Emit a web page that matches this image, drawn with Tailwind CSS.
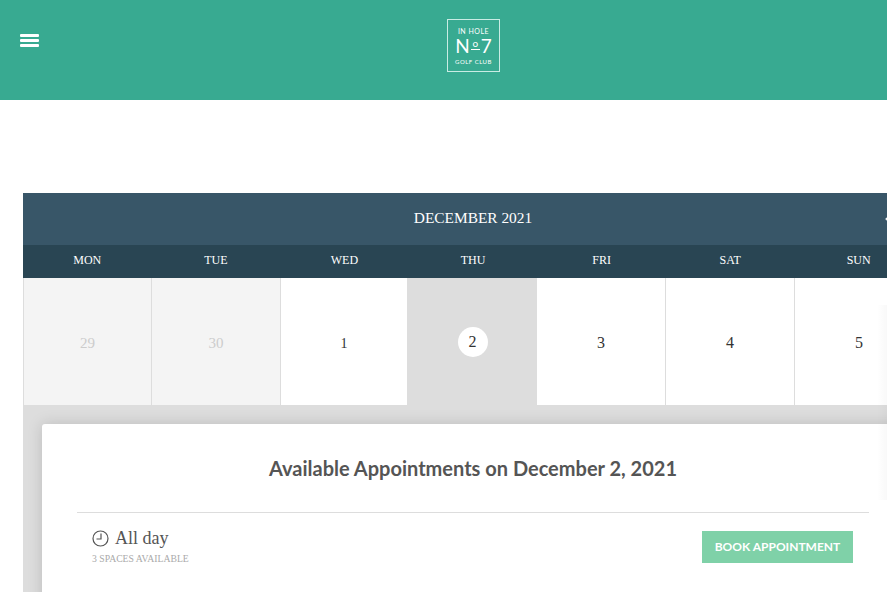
<!DOCTYPE html>
<html lang="en">
<head>
    <meta charset="UTF-8">
    <meta name="viewport" content="width=device-width, initial-scale=1.0">
    <script src="https://cdn.jsdelivr.net/npm/@tailwindcss/browser@4"></script>
    <title>Appointments</title>
</head>
<body class="relative h-[592px] overflow-hidden bg-white font-['Liberation_Serif',serif]">
    <header class="flex h-[100px] items-start bg-[#38aa91] pt-[19px]">
        <button class="ml-[20px] mt-[15px] flex w-[19px] flex-col gap-[2px]">
            <span class="h-[3px] rounded-[1px] bg-white"></span>
            <span class="h-[3px] rounded-[1px] bg-white"></span>
            <span class="h-[3px] rounded-[1px] bg-white"></span>
        </button>
        <div class="ml-[408px] flex h-[53px] w-[53px] flex-col items-center border border-[#c9ece4] pt-[7px] font-['Lato',sans-serif] text-white">
            <span class="text-[7px] leading-[8px] tracking-[0.5px]">IN HOLE</span>
            <span class="mt-[2px] flex h-[17px] items-start text-[19px] leading-[18px]">N<span class="mx-[1px] flex flex-col items-center pt-[2px] text-[10px] leading-[9px]">o<span class="mt-[1px] h-[1px] w-[9px] bg-white"></span></span>7</span>
            <span class="mt-[4px] whitespace-nowrap text-[6px] leading-[8px] tracking-[0.5px]">GOLF CLUB</span>
        </div>
    </header>

    <main class="ml-[23px] mt-[93px] w-[900px]">
        <div class="relative flex h-[52px] items-center justify-center bg-[#385668] pb-[2px] text-[15.4px] text-white">
            DECEMBER 2021
            <svg class="absolute right-[32px] top-[21px]" width="6" height="10" viewBox="0 0 6 10"><path d="M5 1 1 5l4 4" fill="none" stroke="#fff" stroke-width="1.2"/></svg>
        </div>
        <div class="grid h-[33px] grid-cols-7 items-center bg-[#294553] pb-[4px] text-center text-[12px] text-white">
            <span>MON</span><span>TUE</span><span>WED</span><span>THU</span><span>FRI</span><span>SAT</span><span>SUN</span>
        </div>
        <div class="grid h-[127px] grid-cols-[129px_129px_127px_129px_129px_129px_129px] text-center text-[16px] text-[#333]">
            <div class="flex items-center justify-center border-x border-[#dddddd] bg-[#f4f4f4] pt-[3px] text-[15px] text-[#cccccc]">29</div>
            <div class="flex items-center justify-center border-r border-[#dddddd] bg-[#f4f4f4] pt-[3px] text-[15px] text-[#cccccc]">30</div>
            <div class="flex items-center justify-center border-r border-[#dddddd] pt-[3px] text-[14px]">1</div>
            <div class="flex items-center justify-center bg-[#dddddd]"><span class="flex h-[30px] w-[30px] items-center justify-center rounded-full bg-white pt-[1px]">2</span></div>
            <div class="flex items-center justify-center border-r border-[#dddddd] pt-[3px]">3</div>
            <div class="flex items-center justify-center border-r border-[#dddddd] pt-[3px]">4</div>
            <div class="flex items-center justify-center border-r border-[#dddddd] pt-[3px]">5</div>
        </div>
        <section class="h-[187px] overflow-hidden bg-[#dddddd] pl-[19px] pt-[19px]">
            <div class="h-[200px] rounded-[3px] bg-white pl-[35px] pr-[54px] pt-[30px] shadow-[0_0_15px_rgba(0,0,0,0.15)]">
                <div class="w-[792px]">
                    <h2 class="text-center font-['Lato',sans-serif] text-[20px] font-bold leading-[28px] text-[#555]">Available Appointments on December 2, 2021</h2>
                    <div class="mt-[30px] flex items-start justify-between border-t border-[#dddddd] pl-[15px] pr-[16px] pt-[18px]">
                        <div class="-mt-[1px]">
                            <div class="flex items-center gap-[6px] text-[18px] leading-[16px] text-[#555]">
                                <svg width="17" height="17" viewBox="0 0 17 17" fill="none" stroke="#555" stroke-width="1.2"><circle cx="8.5" cy="8.5" r="7.5"/><path d="M9 3.5v5.5H4.5"/></svg>
                                <span class="relative bottom-[1px]">All day</span>
                            </div>
                            <p class="mt-[6px] text-[9.7px] leading-[12px] text-[#aaa]">3 SPACES AVAILABLE</p>
                        </div>
                        <button class="h-[32px] w-[151px] bg-[#7fd1a8] font-['Lato',sans-serif] text-[12px] font-bold text-white">BOOK APPOINTMENT</button>
                    </div>
                </div>
            </div>
        </section>
    </main>

    <!-- faint shadow of the off-screen side panel -->
    <div class="absolute right-0 top-[305px] h-[195px] w-[10px] bg-gradient-to-r from-black/0 to-black/[0.025]"></div>
</body>
</html>
